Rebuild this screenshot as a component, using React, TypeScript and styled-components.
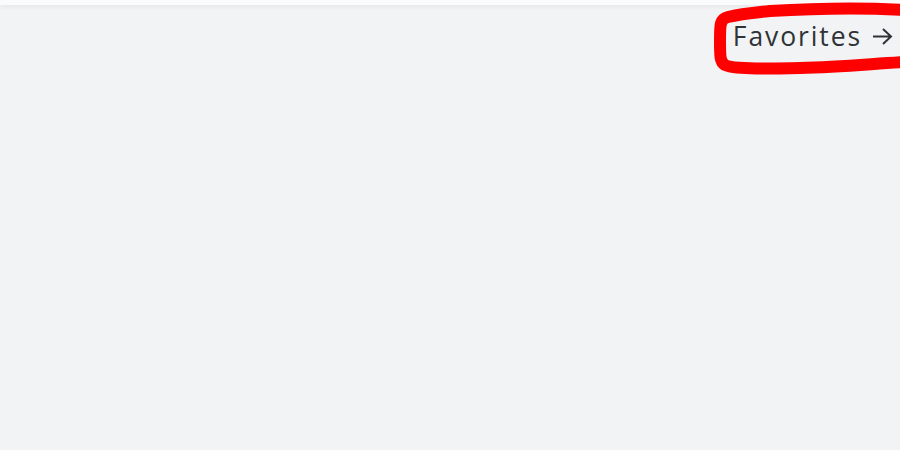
import React from "react";
import styled, { createGlobalStyle } from "styled-components";

const Global = createGlobalStyle`
  html, body { margin: 0; padding: 0; }
  body { background: #f2f3f5; font-family: "Open Sans", "Noto Sans", sans-serif; }
`;

const Page = styled.div`
  width: 900px;
  height: 450px;
  background: #f2f3f5;
  display: flex;
  flex-direction: column;
  overflow: hidden;
`;

const TopStrip = styled.div`
  height: 5px;
  background: #fafbfc;
  box-shadow: 0 2px 4px rgba(0, 0, 0, 0.05);
`;

const Bar = styled.div`
  display: flex;
  justify-content: flex-end;
  padding: 11px 0 0 0;
`;

const LinkWrap = styled.div`
  position: relative;
  margin-right: 7px;
`;

const Link = styled.a`
  display: flex;
  align-items: center;
  gap: 10px;
  font-family: "Open Sans", "Noto Sans", sans-serif;
  font-size: 26.5px;
  line-height: 40px;
  color: #2f3337;
  text-decoration: none;
  letter-spacing: 1.9px;
  white-space: nowrap;
`;

const Scribble = styled.svg`
  position: absolute;
  right: -7px;
  top: -16px;
  width: 200px;
  height: 90px;
  pointer-events: none;
`;

export default function App() {
  return (
    <>
      <Global />
      <Page>
        <TopStrip />
        <Bar>
          <LinkWrap>
            <Link href="#">
              <span>Favorites</span>
              <svg width="21" height="20" viewBox="0 0 21 20">
                <path d="M1 10.5 H19 M11 3 L19 10.5 L11 18" fill="none" stroke="#2f3337" strokeWidth="2" />
              </svg>
            </Link>
            <Scribble viewBox="0 0 200 90">
              <path
                d="M205 10 C170 8 120 8 70 11 C50 13 40 14 28 17 C20 19 20 24 20 40 C20 57 20 62 25 65 C33 69 60 69 100 68 C140 67 170 64 205 62"
                fill="none"
                stroke="#f00"
                strokeWidth="12"
                strokeLinecap="round"
                strokeLinejoin="round"
              />
            </Scribble>
          </LinkWrap>
        </Bar>
      </Page>
    </>
  );
}
